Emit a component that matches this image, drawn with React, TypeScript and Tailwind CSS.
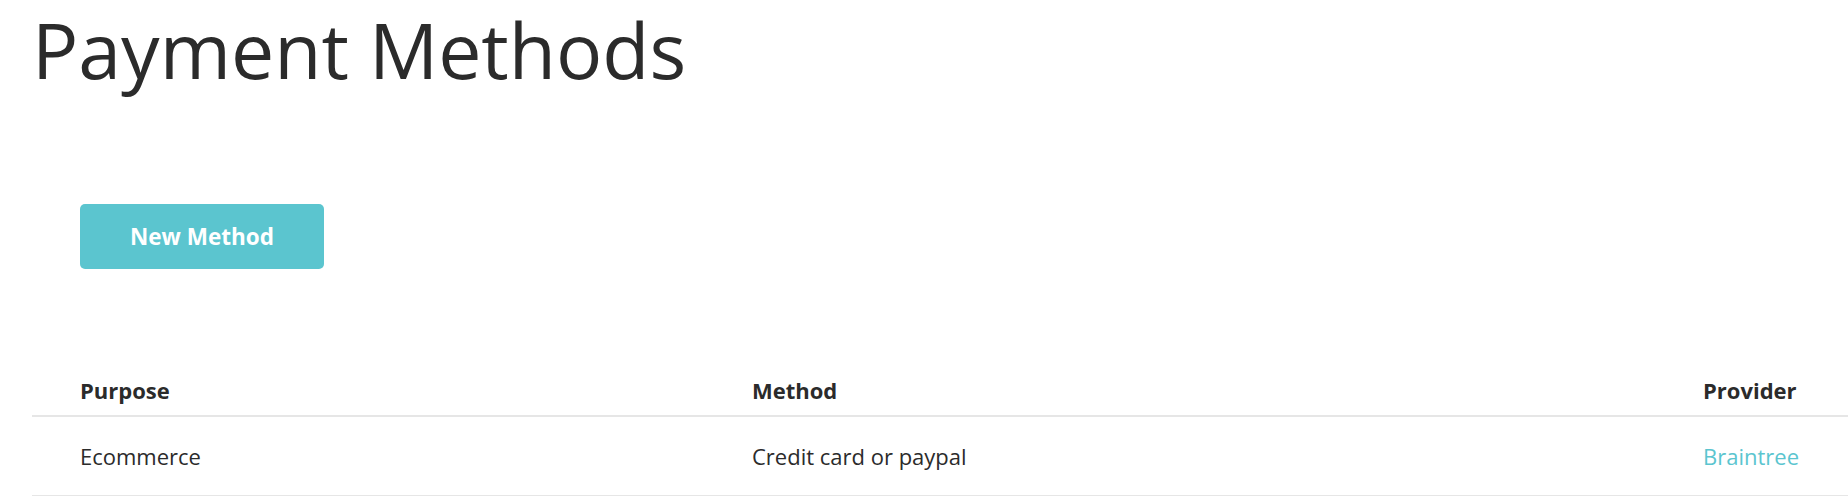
export default function App() {
  const rows = [{ purpose: "Ecommerce", method: "Credit card or paypal", provider: "Braintree" }];

  return (
    <div className="min-h-[496px] bg-white text-[#2b2b2b] font-['Open_Sans',sans-serif] overflow-hidden">
      <div className="pl-[32px]">
        <h1 className="text-[77px] leading-[88px] font-normal pt-[6px] whitespace-nowrap">Payment Methods</h1>

        <div className="pl-[48px] pt-[110px]">
          <button className="h-[65px] w-[244px] rounded-[5px] bg-[#5bc5cf] text-white text-[22.5px] font-bold">
            New Method
          </button>
        </div>

        <div className="mt-[97px]">
          <div className="grid grid-cols-[672px_951px_1fr] border-b-2 border-[#e6e6e6] text-[22px] font-bold h-[51px] items-center">
            <div className="pl-[48px]">Purpose</div>
            <div className="pl-[48px]">Method</div>
            <div className="pl-[48px]">Provider</div>
          </div>
          {rows.map((r) => (
            <div
              key={r.purpose}
              className="grid grid-cols-[672px_951px_1fr] border-b-2 border-[#e6e6e6] text-[22px] h-[80px] items-center">
              <div className="pl-[48px]">{r.purpose}</div>
              <div className="pl-[48px]">{r.method}</div>
              <div className="pl-[48px]">
                <a className="text-[#5bc5cf]" href="#">
                  {r.provider}
                </a>
              </div>
            </div>
          ))}
        </div>
      </div>
    </div>
  );
}
